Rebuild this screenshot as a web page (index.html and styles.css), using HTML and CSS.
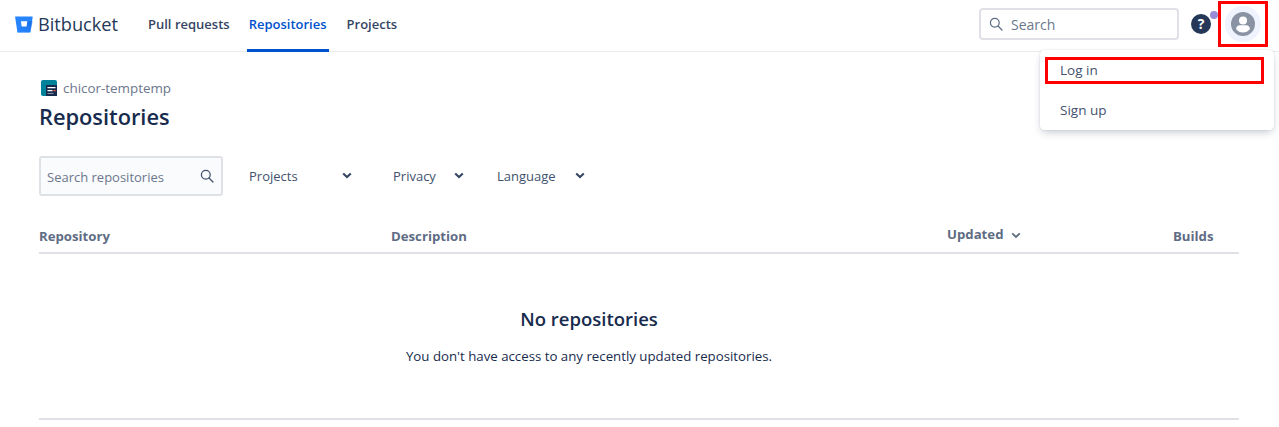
FILE: index.html
```html
<!DOCTYPE html>
<html lang="en">
<head>
<meta charset="utf-8">
<title>Repositories</title>
<link rel="stylesheet" href="styles.css">
</head>
<body>
<header class="topbar">
  <a class="logo">
    <svg class="logo-mark" width="18" height="17" viewBox="0 0 18 17"><defs><linearGradient id="lg" x1="1" y1="0" x2="0.4" y2="1"><stop offset="0" stop-color="#0052cc"/><stop offset="1" stop-color="#2684ff"/></linearGradient></defs><path fill="#2684ff" d="M0.6 0.4a.5.5 0 0 0-.5.6L2.4 15.9c.06.36.37.63.74.63h11.7c.27 0 .5-.2.55-.47L17.7 1a.5.5 0 0 0-.5-.6z"/><path fill="url(#lg)" d="M17.7 5.2h-5.2l-.8 5.2H6.4L2 15.9c.3.35.7.6 1.14.6h11.7c.27 0 .5-.2.55-.47z" opacity=".45"/><path fill="#fff" d="M5.9 5.2h6.4l-.75 5.2H6.7z"/></svg>
    <span class="logo-text">Bitbucket</span>
  </a>
  <nav class="nav">
    <a class="nav-item nav-first">Pull requests</a>
    <a class="nav-item active">Repositories</a>
    <a class="nav-item">Projects</a>
  </nav>
  <div class="top-right">
    <div class="top-search">
      <svg width="14" height="14" viewBox="0 0 14 14" fill="none" stroke="#5e6c84" stroke-width="1.2"><circle cx="5.8" cy="5.8" r="4.4"/><path d="M9 9l4 4" stroke-linecap="round"/></svg>
      <span class="top-search-text">Search</span>
    </div>
    <div class="help">
      <svg width="20" height="20" viewBox="0 0 20 20"><circle cx="10" cy="10" r="10" fill="#253858"/><text x="10" y="15" class="help-q" text-anchor="middle">?</text></svg>
      <span class="help-dot"></span>
    </div>
    <div class="avatar-ring">
      <svg width="24" height="24" viewBox="0 0 24 24"><circle cx="12" cy="12" r="12" fill="#8993a4"/><circle cx="12" cy="8.6" r="4" fill="#fff"/><path fill="#fff" d="M5.2 16.6c0-2 1.6-3.4 3.6-3.4h6.4c2 0 3.6 1.4 3.6 3.4v.6c-1.6 2-4 3.3-6.8 3.3s-5.2-1.3-6.8-3.3z"/></svg>
    </div>
  </div>
</header>

<main class="page">
  <div class="crumb">
    <svg width="16" height="16" viewBox="0 0 16 16"><rect width="16" height="16" rx="2" fill="#00829b"/><rect x="5" y="5" width="11" height="11" fill="#172b4d"/><path fill="#fff" d="M6.5 7h8v1.3h-8zM6.5 10h5v1.3h-5z"/><path fill="#ff5630" d="M12.5 10h2v1.3h-2z"/><path fill="#8993a4" d="M6.5 13h6v1h-6z"/></svg>
    <span>chicor-temptemp</span>
  </div>
  <h1 class="title">Repositories</h1>

  <div class="filters">
    <div class="repo-search">
      <span class="repo-search-text">Search repositories</span>
      <svg width="14" height="14" viewBox="0 0 14 14" fill="none" stroke="#42526e" stroke-width="1.3"><circle cx="5.8" cy="5.8" r="4.4"/><path d="M9 9l4 4" stroke-linecap="round"/></svg>
    </div>
    <div class="filter f-projects"><span>Projects</span><svg class="chev" width="10" height="7" viewBox="0 0 10 7"><path d="M1.2 1.4L5 5l3.8-3.6" fill="none" stroke="#344563" stroke-width="2"/></svg></div>
    <div class="filter f-privacy"><span>Privacy</span><svg class="chev" width="10" height="7" viewBox="0 0 10 7"><path d="M1.2 1.4L5 5l3.8-3.6" fill="none" stroke="#344563" stroke-width="2"/></svg></div>
    <div class="filter f-language"><span>Language</span><svg class="chev" width="10" height="7" viewBox="0 0 10 7"><path d="M1.2 1.4L5 5l3.8-3.6" fill="none" stroke="#344563" stroke-width="2"/></svg></div>
  </div>

  <div class="table-head">
    <div>Repository</div>
    <div>Description</div>
    <div class="col-updated">Updated<svg class="sort" width="10" height="7" viewBox="0 0 10 7"><path d="M1.2 1.4L5 5l3.8-3.6" fill="none" stroke="#5e6c84" stroke-width="1.8"/></svg></div>
    <div class="col-builds">Builds</div>
  </div>

  <section class="empty">
    <h2 class="empty-title">No repositories</h2>
    <p class="empty-text">You don't have access to any recently updated repositories.</p>
  </section>
</main>

<div class="menu">
  <a class="menu-item">Log in</a>
  <a class="menu-item">Sign up</a>
</div>
<div class="mark mark-avatar"></div>
<div class="mark mark-login"></div>
</body>
</html>
```

FILE: styles.css
```css
* { box-sizing: border-box; }
html, body { height: 100%; }
body {
  margin: 0;
  overflow: hidden;
  background: #fff;
  color: #172b4d;
  font-family: "Open Sans", "Noto Sans", "Liberation Sans", sans-serif;
  font-size: 14px;
  position: relative;
}
.topbar {
  height: 52px;
  display: flex;
  align-items: center;
  padding: 0 18px 0 15px;
  border-bottom: 1px solid #ebecf0;
}
.logo { display: flex; align-items: center; gap: 5px; width: 131px; flex: none; margin-bottom: 3px; }
.logo-text { font-size: 18.2px; color: #253858; }
.nav { display: flex; height: 52px; margin-bottom: -1px; align-self: flex-start; gap: 16px; }
.nav-item {
  display: flex;
  align-items: center;
  padding: 0 2px;
  font-weight: 600;
  font-size: 13px;
  color: #344563;
  border-bottom: 3px solid transparent;
  height: 52px;
  padding-bottom: 1px;
}
.nav-first { margin-right: -1px; }
.nav-item.active { color: #0052cc; border-bottom-color: #0052cc; }
.top-right { margin-left: auto; display: flex; align-items: center; margin-bottom: 3px; }
.top-search {
  width: 200px;
  height: 32px;
  display: flex;
  align-items: center;
  gap: 8px;
  padding-left: 8px;
  border: 2px solid #dfe1e6;
  border-radius: 4px;
}
.top-search-text { color: #6b778c; font-size: 14px; }
.help { position: relative; margin-left: 12px; width: 20px; height: 20px; }
.help svg { display: block; }
.help-q { font: 700 14px "Open Sans", sans-serif; fill: #fff; }
.help-dot {
  position: absolute;
  top: -3px;
  right: -7px;
  width: 8px;
  height: 8px;
  border-radius: 50%;
  background: #998dd9;
}
.avatar-ring {
  margin-left: 14px;
  width: 36px;
  height: 36px;
  padding: 6px;
  border-radius: 50%;
  background: #eef3fd;
  display: flex;
}
.page { padding: 28px 40px 0 39px; }
.crumb { display: flex; align-items: center; gap: 6px; height: 16px; padding-left: 2px; color: #6b778c; font-size: 13.4px; }
.title { margin: 5px 0 0; font-size: 21.8px; line-height: 32px; font-weight: 600; color: #172b4d; }
.filters { margin-top: 23px; display: flex; align-items: center; height: 40px; }
.repo-search {
  width: 184px;
  height: 40px;
  display: flex;
  align-items: center;
  justify-content: space-between;
  padding: 0 7px 0 6px;
  background: #fafbfc;
  border: 2px solid #dfe1e6;
  border-radius: 3px;
}
.repo-search-text { color: #6b778c; font-size: 13px; margin-top: 2px; }
.filter { display: flex; align-items: center; justify-content: space-between; font-size: 13px; color: #42526e; padding-bottom: 1px; }
.f-projects { margin-left: 26px; width: 103px; }
.f-privacy { margin-left: 41px; width: 71px; }
.f-language { margin-left: 33px; width: 88px; }
.table-head {
  margin-top: 26px;
  height: 32px;
  padding-bottom: 3px;
  display: grid;
  grid-template-columns: 352px 556px 226px 66px;
  align-items: center;
  font-size: 13.2px;
  font-weight: 700;
  color: #5e6c84;
  border-bottom: 2px solid #dfe1e6;
}
.col-updated { display: flex; align-items: center; gap: 7px; margin-top: -4px; }
.col-updated .sort { margin-top: 4px; }
.col-builds { width: 40px; }
.empty {
  height: 166px;
  text-align: center;
  padding: 53px 100px 0 0;
  border-bottom: 2px solid #dfe1e6;
}
.empty-title { margin: 0; font-size: 18.5px; line-height: 24px; font-weight: 600; color: #172b4d; }
.empty-text { margin: 15px 0 0; font-size: 13.25px; line-height: 20px; color: #172b4d; }
.menu {
  position: absolute;
  left: 1040px;
  top: 50px;
  width: 234px;
  height: 80px;
  background: #fff;
  border-radius: 4px;
  box-shadow: 0 4px 8px -2px rgba(9,30,66,.25), 0 0 1px rgba(9,30,66,.31);
}
.menu-item { display: flex; align-items: center; height: 40px; padding-left: 20px; font-size: 13.5px; color: #42526e; }
.mark { position: absolute; border: 3px solid #ff0000; }
.mark-avatar { left: 1218px; top: 1px; width: 50px; height: 46px; }
.mark-login { left: 1045px; top: 57px; width: 219px; height: 27px; }
```
